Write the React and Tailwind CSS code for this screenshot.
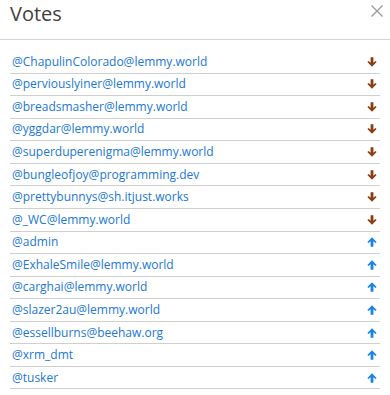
import React from "react";

const rows = [
  ["@ChapulinColorado@lemmy.world", -1],
  ["@perviouslyiner@lemmy.world", -1],
  ["@breadsmasher@lemmy.world", -1],
  ["@yggdar@lemmy.world", -1],
  ["@superduperenigma@lemmy.world", -1],
  ["@bungleofjoy@programming.dev", -1],
  ["@prettybunnys@sh.itjust.works", -1],
  ["@_WC@lemmy.world", -1],
  ["@admin", 1],
  ["@ExhaleSmile@lemmy.world", 1],
  ["@carghai@lemmy.world", 1],
  ["@slazer2au@lemmy.world", 1],
  ["@essellburns@beehaw.org", 1],
  ["@xrm_dmt", 1],
  ["@tusker", 1],
];

function Arrow({ up }) {
  return (
    <svg
      width="10"
      height="10"
      viewBox="0 0 10 10"
      className={up ? "text-[#1a84e6]" : "text-[#8a3c12] rotate-180"}
      fill="currentColor"
    >
      <path d="M5 0.3 L9.6 4.9 L8.4 6.1 L6.4 4.2 L6.4 9.7 L3.6 9.7 L3.6 4.2 L1.6 6.1 L0.4 4.9 Z" />
    </svg>
  );
}

export default function App() {
  return (
    <div className="w-[390px] h-[395px] bg-white overflow-hidden font-['Open_Sans',sans-serif]">
      <div className="h-[40px] border-b border-[#d4d4d4] flex items-start justify-between pl-[10px] pr-[6px]">
        <div className="text-[20px] leading-[28px] text-[#404040] tracking-[0px]">Votes</div>
        <svg width="12" height="12" viewBox="0 0 12 12" className="mt-[5px] mr-[1px]" stroke="#9a9a9a" strokeWidth="1.3">
          <path d="M0.5 0.5L11.5 11.5M11.5 0.5L0.5 11.5" />
        </svg>
      </div>
      <div className="mx-[10px] mt-[11px]">
        {rows.map(([name, v], i) => (
          <div
            key={i}
            className="h-[22.57px] border-b border-[#cfcfcf] flex items-center justify-between pl-[2px] pr-[3px]"
          >
            <span className="text-[12px] leading-[20px] text-[#2077d6]">{name}</span>
            <Arrow up={v > 0} />
          </div>
        ))}
      </div>
    </div>
  );
}
